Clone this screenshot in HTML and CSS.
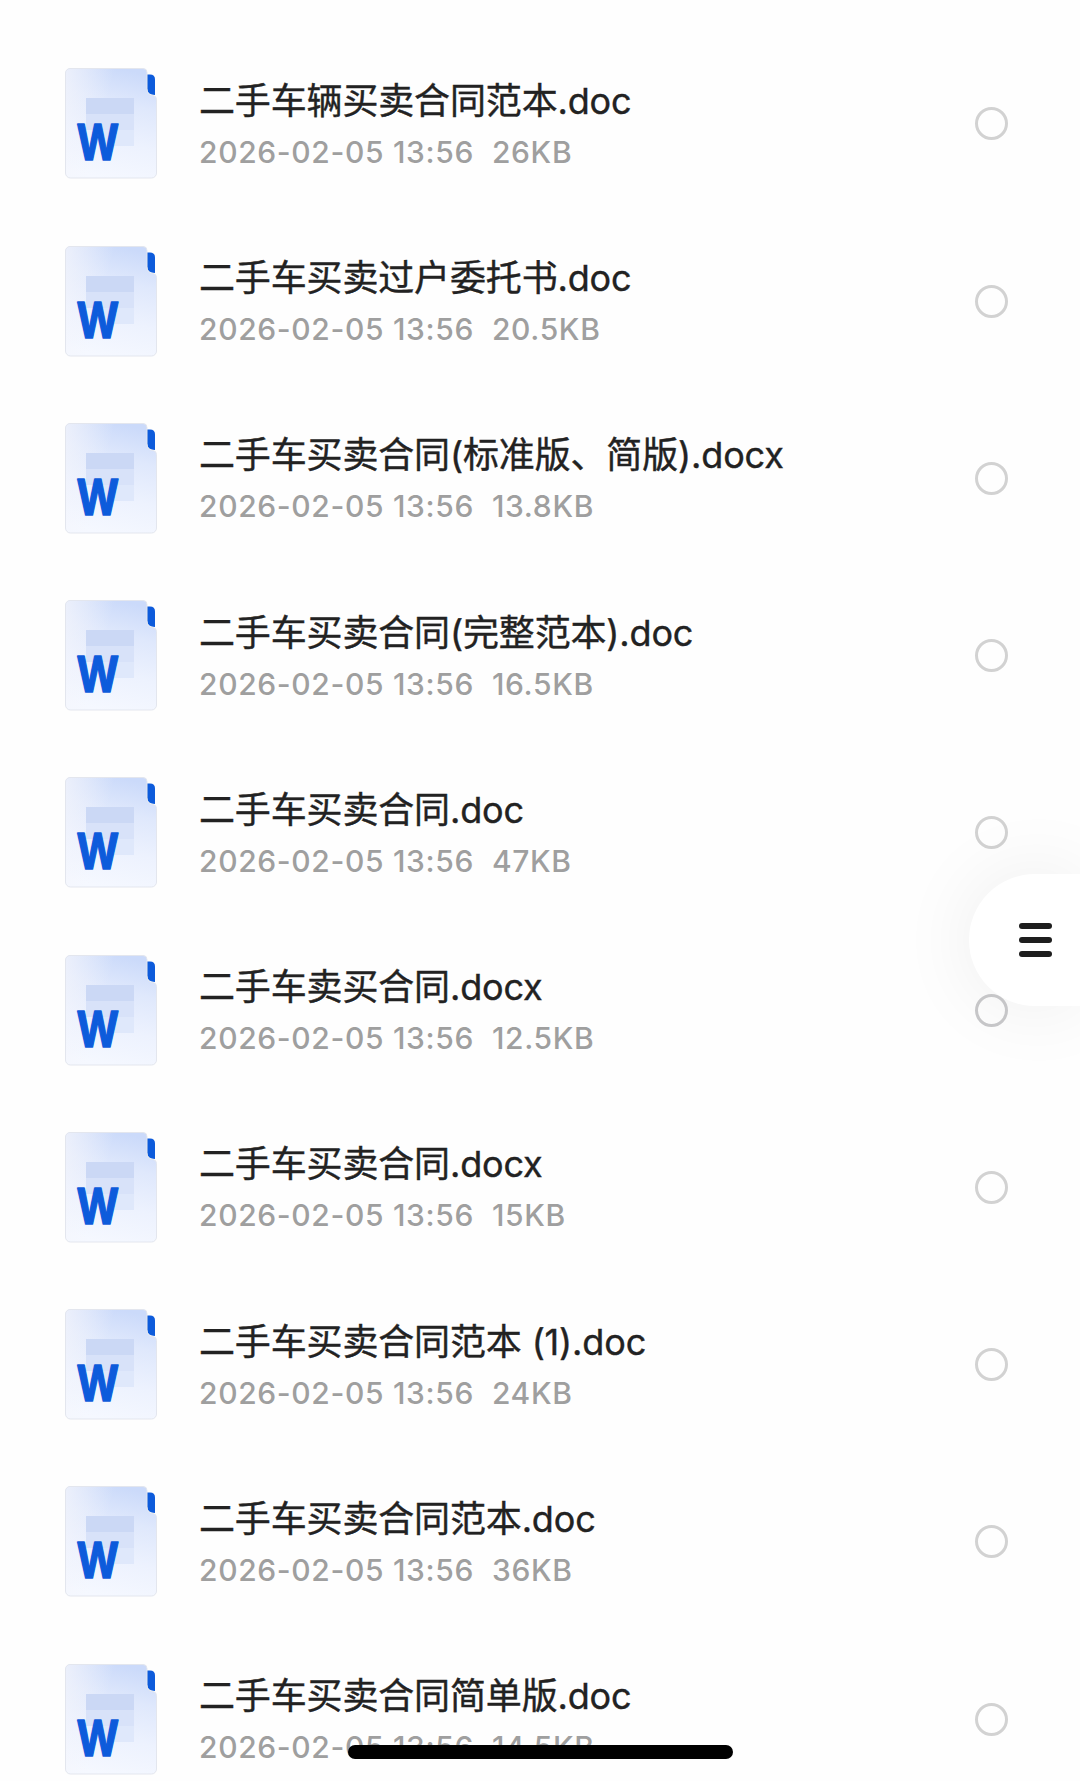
FILE: index.html
```
<!DOCTYPE html>
<html lang="zh-CN">

    <head>
        <meta charset="UTF-8">
        <meta name="viewport" content="width=device-width, initial-scale=1.0">
        <title>文件列表</title>
        <link rel="stylesheet" href="styles.css">
    </head>

    <body>
        <svg class="defs" width="0" height="0">
            <defs>
                <linearGradient id="page" x1="0.6" y1="0" x2="0.4" y2="1">
                    <stop offset="0" stop-color="#cbdafa" />
                    <stop offset="0.3" stop-color="#dfe8fc" />
                    <stop offset="0.65" stop-color="#edf2fe" />
                    <stop offset="1" stop-color="#f5f8ff" />
                </linearGradient>
                <linearGradient id="shine" x1="0" y1="0" x2="1" y2="0.3">
                    <stop offset="0" stop-color="#f4f5fb" stop-opacity="0.75" />
                    <stop offset="0.5" stop-color="#f4f5fb" stop-opacity="0" />
                </linearGradient>
                <symbol id="word" viewBox="0 0 92 111">
                    <path d="M82 6.500h3q5 0 5 5V27q-8-.5-8-6.500z" fill="#0d5bdb" />
                    <path d="M5 .5h73a4 4 0 0 1 4 4V21q0 6 6 6.500q3.500.5 3.500 4V105a5 5 0 0 1-5 5H5.500a5 5 0 0 1-5-5V5a4.500 4.500 0 0 1 4.500-4.500z" fill="url(#page)" />
                    <path d="M5 .5h73a4 4 0 0 1 4 4V21q0 6 6 6.500q3.500.5 3.500 4V105a5 5 0 0 1-5 5H5.500a5 5 0 0 1-5-5V5a4.500 4.500 0 0 1 4.500-4.500z" fill="url(#shine)" stroke="#e3e6ee" stroke-width="1" />
                    <path d="M21 30h48v16H21z" fill="#cbd8f5" />
                    <path d="M21 46h48v16H21z" fill="#d8e2f9" />
                    <path d="M37 62h32v16H37z" fill="#dfe8fb" />
                    <text class="word-letter" x="11.500" y="92" textLength="42.500" lengthAdjust="spacingAndGlyphs">W</text>
                </symbol>
            </defs>
        </svg>

        <ul class="file-list">
            <li class="file">
                <svg class="file-icon"><use href="#word" /></svg>
                <div class="file-info">
                    <div class="file-name">二手车辆买卖合同范本.doc</div>
                    <div class="file-meta"><span>2026-02-05 13:56</span><span>26KB</span></div>
                </div>
                <span class="check"></span>
            </li>
            <li class="file">
                <svg class="file-icon"><use href="#word" /></svg>
                <div class="file-info">
                    <div class="file-name">二手车买卖过户委托书.doc</div>
                    <div class="file-meta"><span>2026-02-05 13:56</span><span>20.5KB</span></div>
                </div>
                <span class="check"></span>
            </li>
            <li class="file">
                <svg class="file-icon"><use href="#word" /></svg>
                <div class="file-info">
                    <div class="file-name">二手车买卖合同(标准版、简版).docx</div>
                    <div class="file-meta"><span>2026-02-05 13:56</span><span>13.8KB</span></div>
                </div>
                <span class="check"></span>
            </li>
            <li class="file">
                <svg class="file-icon"><use href="#word" /></svg>
                <div class="file-info">
                    <div class="file-name">二手车买卖合同(完整范本).doc</div>
                    <div class="file-meta"><span>2026-02-05 13:56</span><span>16.5KB</span></div>
                </div>
                <span class="check"></span>
            </li>
            <li class="file">
                <svg class="file-icon"><use href="#word" /></svg>
                <div class="file-info">
                    <div class="file-name">二手车买卖合同.doc</div>
                    <div class="file-meta"><span>2026-02-05 13:56</span><span>47KB</span></div>
                </div>
                <span class="check"></span>
            </li>
            <li class="file">
                <svg class="file-icon"><use href="#word" /></svg>
                <div class="file-info">
                    <div class="file-name">二手车卖买合同.docx</div>
                    <div class="file-meta"><span>2026-02-05 13:56</span><span>12.5KB</span></div>
                </div>
                <span class="check above"></span>
            </li>
            <li class="file">
                <svg class="file-icon"><use href="#word" /></svg>
                <div class="file-info">
                    <div class="file-name">二手车买卖合同.docx</div>
                    <div class="file-meta"><span>2026-02-05 13:56</span><span>15KB</span></div>
                </div>
                <span class="check"></span>
            </li>
            <li class="file">
                <svg class="file-icon"><use href="#word" /></svg>
                <div class="file-info">
                    <div class="file-name">二手车买卖合同范本 (1).doc</div>
                    <div class="file-meta"><span>2026-02-05 13:56</span><span>24KB</span></div>
                </div>
                <span class="check"></span>
            </li>
            <li class="file">
                <svg class="file-icon"><use href="#word" /></svg>
                <div class="file-info">
                    <div class="file-name">二手车买卖合同范本.doc</div>
                    <div class="file-meta"><span>2026-02-05 13:56</span><span>36KB</span></div>
                </div>
                <span class="check"></span>
            </li>
            <li class="file">
                <svg class="file-icon"><use href="#word" /></svg>
                <div class="file-info">
                    <div class="file-name">二手车买卖合同简单版.doc</div>
                    <div class="file-meta"><span>2026-02-05 13:56</span><span>14.5KB</span></div>
                </div>
                <span class="check"></span>
            </li>
        </ul>

        <button class="menu-button" aria-label="菜单">
            <span class="menu-line"></span>
            <span class="menu-line"></span>
            <span class="menu-line"></span>
        </button>

        <div class="home-indicator"></div>
    </body>

</html>
```

FILE: styles.css
```
* {
    margin: 0;
    padding: 0;
    box-sizing: border-box;
}

body {
    position: relative;
    height: 1781px;
    overflow: hidden;
    background-color: #fefefe;
    font-family: Inter, "Noto Sans CJK SC", sans-serif;
}

.defs {
    position: absolute;
}

.file-list {
    list-style: none;
    padding-top: 35.2px;
}

.file {
    display: flex;
    align-items: center;
    height: 177.25px;
    padding: 0 72px 0 65px;
}

.file-icon {
    width: 92px;
    height: 111px;
    flex-shrink: 0;
}

.word-letter {
    font-family: Inter, sans-serif;
    font-size: 50px;
    font-weight: 700;
    fill: #0d5bdb;
    stroke: #0d5bdb;
    stroke-width: 1.5px;
    stroke-linejoin: round;
}

.file-info {
    flex: 1;
    margin-left: 42px;
    padding-top: 4px;
    white-space: nowrap;
}

.file-name {
    font-size: 36px;
    line-height: 52px;
    letter-spacing: -0.15px;
    color: #222;
    -webkit-text-stroke: 0.4px #222;
}

.file-meta {
    display: flex;
    gap: 18px;
    font-size: 30px;
    font-weight: 500;
    line-height: 50px;
    letter-spacing: 0.65px;
    color: #9f9f9f;
}

.check {
    width: 33px;
    height: 33px;
    border: 3px solid #d2d2d2;
    border-radius: 50%;
}

.check.above {
    position: relative;
    z-index: 2;
    border-color: #c6c6c8;
}

.menu-button {
    position: absolute;
    top: 874px;
    right: 0;
    z-index: 1;
    display: flex;
    flex-direction: column;
    justify-content: center;
    gap: 8px;
    width: 111px;
    height: 132px;
    padding-left: 50px;
    border: none;
    border-radius: 66px 0 0 66px;
    background-color: #fff;
    box-shadow: 0 0 80px rgba(0, 0, 0, 0.07);
}

.menu-line {
    width: 33px;
    height: 6px;
    border-radius: 3px;
    background-color: #1e1e1e;
}

.home-indicator {
    position: absolute;
    top: 1745px;
    left: 348px;
    z-index: 3;
    width: 385px;
    height: 14px;
    border-radius: 7px;
    background-color: #000;
}
```
